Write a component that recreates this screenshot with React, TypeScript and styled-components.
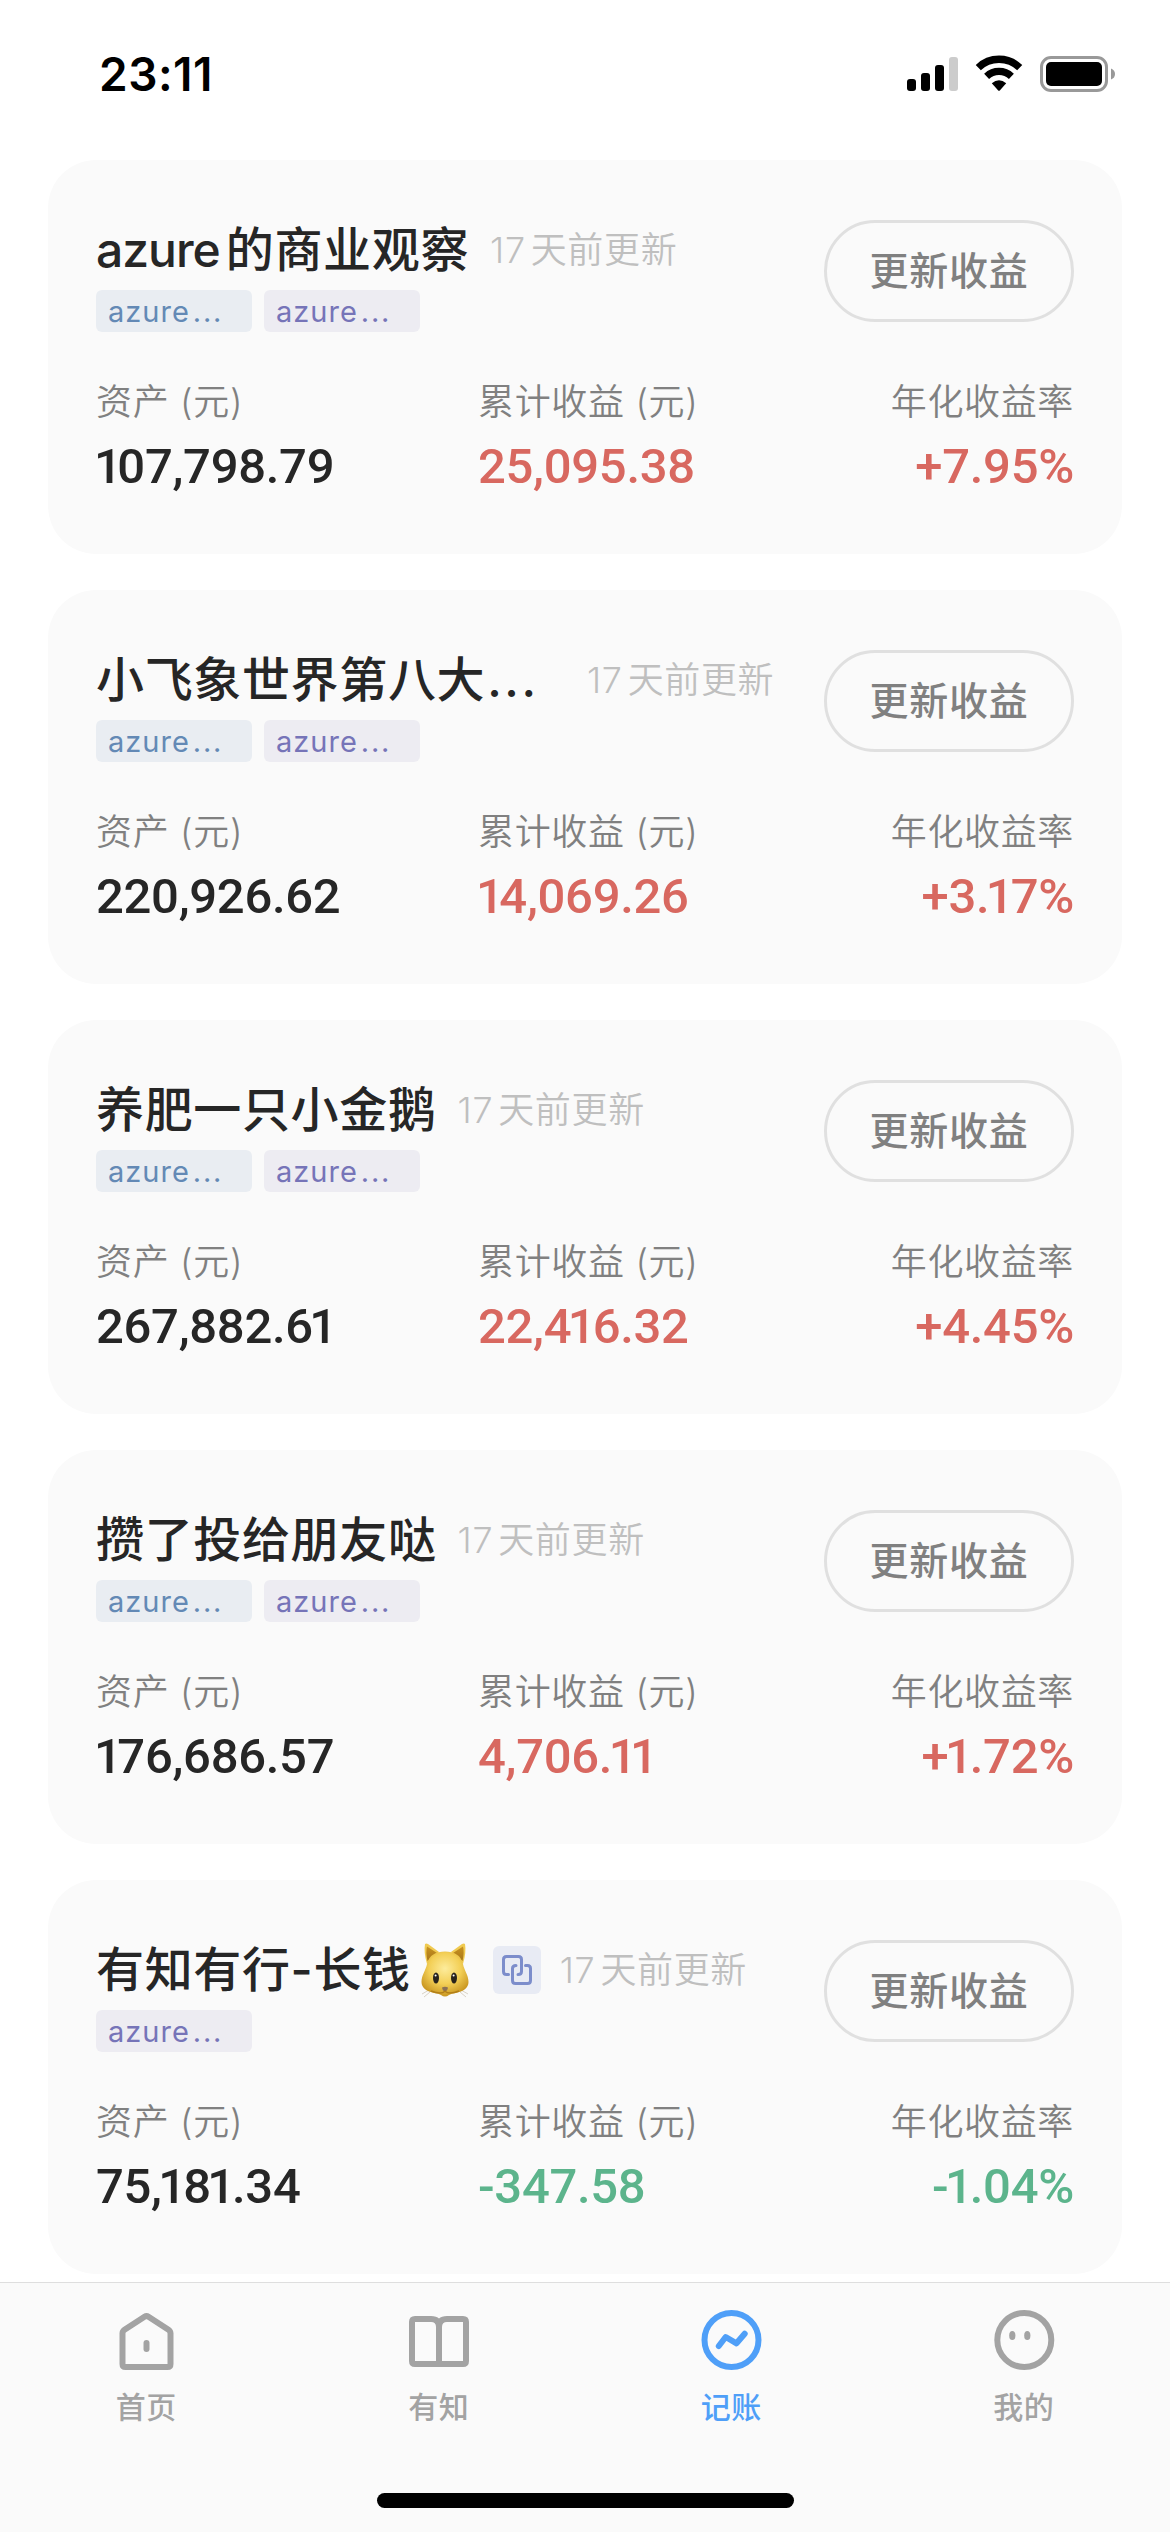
import React from "react";
import styled, { createGlobalStyle } from "styled-components";

const GlobalStyle = createGlobalStyle`
  * { box-sizing: border-box; }
  html, body { margin: 0; padding: 0; background: #fff; }
  body { overflow: hidden; -webkit-font-smoothing: antialiased; }
`;

const GREY = "#a3a3a3";
const BLUE = "#4f9ff8";

const Screen = styled.div`
  display: flex;
  flex-direction: column;
  width: 1170px;
  height: 2532px;
  background: #fff;
  font-family: Inter, "Noto Sans CJK SC", sans-serif;
  white-space: nowrap;
  overflow: hidden;
`;

const StatusBar = styled.header`
  flex: none;
  display: flex;
  justify-content: space-between;
  align-items: center;
  height: 148px;
  padding: 0 54px 0 99px;
`;

const Clock = styled.div`
  font-size: 46px;
  line-height: 60px;
  font-weight: 600;
  letter-spacing: 0.5px;
  color: #000;
`;

const CardList = styled.main`
  flex: 1;
  min-height: 0;
  display: flex;
  flex-direction: column;
  gap: 36px;
  padding: 12px 48px 0;
`;

const Card = styled.section`
  flex: none;
  height: 394px;
  padding: 60px 48px 0;
  border-radius: 48px;
  background: #fafafa;
`;

const CardHeader = styled.div`
  display: flex;
  justify-content: space-between;
  align-items: flex-start;
  height: 112px;
`;

const TitleRow = styled.div`
  display: flex;
  align-items: center;
  height: 60px;
`;

const Title = styled.h2<{ $clipped?: boolean }>`
  display: flex;
  align-items: center;
  margin: 0;
  min-width: ${(p) => (p.$clipped ? "470px" : "0")};
  font-size: 48px;
  line-height: 60px;
  font-weight: 500;
  letter-spacing: 0.65px;
  color: #262626;
`;

const Latin = styled.span`
  margin-right: 6px;
  letter-spacing: -1px;
`;

const Dots = styled.span`
  margin-left: 2px;
  letter-spacing: 2.6px;
`;

const LinkBadge = styled.span`
  display: flex;
  width: 48px;
  height: 48px;
  margin-left: 23px;
  border-radius: 6px;
  background: #e8ebf4;
`;

const Updated = styled.span<{ $tight?: boolean }>`
  display: flex;
  margin-left: ${(p) => (p.$tight ? "19px" : "21px")};
  font-size: 36px;
  line-height: 48px;
  font-weight: 350;
  letter-spacing: 0.65px;
  color: #bfbfbf;
`;

const Days = styled.span`
  margin-right: 5px;
`;

const Tags = styled.div`
  display: flex;
  gap: 12px;
  margin-top: 10px;
`;

const Tag = styled.span<{ $tone: "blue" | "purple" }>`
  width: 156px;
  height: 42px;
  padding-left: 12px;
  border-radius: 6px;
  font-size: 29px;
  line-height: 43px;
  letter-spacing: 1px;
  color: ${(p) => (p.$tone === "blue" ? "#6389b5" : "#7674b8")};
  background: ${(p) => (p.$tone === "blue" ? "#e9edf2" : "#edecf2")};
`;

const TagDots = styled.span`
  margin-left: 3px;
  letter-spacing: 1.8px;
`;

const UpdateButton = styled.button`
  width: 250px;
  height: 102px;
  padding: 0;
  border: 3px solid #e0e0e0;
  border-radius: 51px;
  background: transparent;
  font-family: inherit;
  font-size: 39px;
  line-height: 48px;
  font-weight: 500;
  letter-spacing: 0.7px;
  color: #808080;
`;

const Stats = styled.div`
  display: grid;
  grid-template-columns: 382px 1fr auto;
  margin-top: 46px;
`;

const Stat = styled.div<{ $end?: boolean }>`
  display: flex;
  flex-direction: column;
  gap: 11px;
  align-items: ${(p) => (p.$end ? "flex-end" : "flex-start")};
`;

const StatLabel = styled.span`
  font-size: 36px;
  line-height: 48px;
  font-weight: 350;
  letter-spacing: 0.65px;
  color: #808080;
`;

type Tone = "ink" | "gain" | "loss";
const toneColor: Record<Tone, string> = { ink: "#262626", gain: "#d86860", loss: "#5cb48c" };

const StatValue = styled.span<{ $tone: Tone }>`
  font-family: Roboto, Inter, sans-serif;
  font-size: 49px;
  line-height: 60px;
  font-weight: 500;
  letter-spacing: -0.3px;
  color: ${(p) => toneColor[p.$tone]};
`;

// A run of ones is set tighter than the other figures.
const Ones = styled.span<{ $leading: boolean }>`
  margin-left: ${(p) => (p.$leading ? "-2px" : "-3.5px")};
  margin-right: ${(p) => (p.$leading ? "2px" : "3.5px")};
  letter-spacing: -6.5px;
`;

const TabBar = styled.nav`
  flex: none;
  display: flex;
  flex-direction: column;
  align-items: center;
  height: 250px;
  border-top: 1px solid #dedede;
  background: #fafafa;
`;

const TabItems = styled.div`
  display: flex;
  width: 100%;
  height: 210px;
  padding-top: 21px;
`;

const TabItem = styled.div<{ $active?: boolean }>`
  flex: 1;
  display: flex;
  flex-direction: column;
  align-items: center;
  gap: 11px;
  font-size: 30px;
  line-height: 40px;
  font-weight: 500;
  letter-spacing: 0.4px;
  color: ${(p) => (p.$active ? BLUE : GREY)};
`;

const HomeIndicator = styled.div`
  width: 417px;
  height: 15px;
  border-radius: 8px;
  background: #000;
`;

const StatusIcons = () => (
  <svg width="209" height="40" viewBox="907 54 209 40" fill="none">
    <rect x="907" y="79" width="9" height="12" rx="3" fill="#000" />
    <rect x="921" y="73" width="9" height="18" rx="3" fill="#000" />
    <rect x="935" y="65" width="9" height="26" rx="3" fill="#000" />
    <rect x="949" y="57" width="9" height="34" rx="3" fill="#ccc" />
    <path d="M978.3 67.6A30 30 0 0 1 1019.7 67.6" stroke="#000" strokeWidth="7.4" />
    <path d="M986.6 76.3A18 18 0 0 1 1011.4 76.3" stroke="#000" strokeWidth="7.2" />
    <path d="M991.8 83.2Q999 77.5 1006.2 83.2L999.8 90.4Q999 91.2 998.2 90.4Z" fill="#000" />
    <rect x="1041.5" y="57.5" width="65" height="33" rx="9.5" stroke="#999" strokeWidth="3" />
    <rect x="1046" y="62" width="56" height="24" rx="5" fill="#000" />
    <path d="M1111 68.5Q1115 70 1115 74T1111 79.5Z" fill="#999" />
  </svg>
);

const LinkIcon = () => (
  <svg width="48" height="48" viewBox="0 0 48 48" fill="none" stroke="#7c8dcb" strokeWidth="3" strokeLinecap="round">
    <path d="M15.5 28.5H13.5Q10.5 28.5 10.5 25.5V13.5Q10.5 10.5 13.5 10.5H25.5Q28.5 10.5 28.5 13.5V25.5Q28.5 28.5 25 28.5" />
    <path d="M23 19.5Q19.5 19.5 19.5 22.5V34.5Q19.5 37.5 22.5 37.5H34.5Q37.5 37.5 37.5 34.5V22.5Q37.5 19.5 34.5 19.5H32.5" />
  </svg>
);

const CatArt = styled.svg`
  display: block;
  margin-left: 9px;
`;

const Cat = () => (
  <CatArt width="50" height="56" viewBox="0 0 50 56" fill="none">
    <defs>
      <radialGradient id="fur" cx="0.5" cy="0.38" r="0.62">
        <stop offset="0" stopColor="#fdec9c" />
        <stop offset="0.55" stopColor="#f3cf56" />
        <stop offset="1" stopColor="#c99620" />
      </radialGradient>
      <linearGradient id="ear" x1="0" y1="0" x2="0" y2="1">
        <stop offset="0" stopColor="#c8921f" />
        <stop offset="1" stopColor="#a8771a" />
      </linearGradient>
    </defs>
    <path d="M9 48L2 52M10 50L4 55M41 48L48 52M40 50L46 55" stroke="#d9d2c6" strokeWidth="1" />
    <path d="M5 2Q6 1 8 2L19 10L7 22Q3.5 10 5 2ZM45 2Q44 1 42 2L31 10L43 22Q46.5 10 45 2Z" fill="#f0ca50" />
    <path d="M7 4.5L17 11L7.5 19Q5.5 10 7 4.5ZM43 4.5L33 11L42.5 19Q44.5 10 43 4.5Z" fill="url(#ear)" />
    <path d="M25 9.5C34 9.5 41 13 43 22C44 28 48.5 33 48.5 40C48.5 46 43 49.5 36 51Q31 51.5 29 53Q25 56 21 53Q19 51.5 14 51C7 49.5 1.5 46 1.5 40C1.5 33 6 28 7 22C9 13 16 9.5 25 9.5Z" fill="url(#fur)" />
    <ellipse cx="16" cy="36" rx="3" ry="5.5" fill="#29231c" />
    <ellipse cx="34" cy="36" rx="3" ry="5.5" fill="#29231c" />
    <circle cx="15.6" cy="33.5" r="1" fill="#fff" />
    <circle cx="33.6" cy="33.5" r="1" fill="#fff" />
    <path d="M22 45.5Q25 44 28 45.5Q27.5 49 25 49.3Q22.5 49 22 45.5Z" fill="#8c7154" />
    <path d="M11 49Q21 53 25 49.3Q29 53 39 49" stroke="#b27f18" strokeWidth="1.5" />
  </CatArt>
);

const TabIcon = ({ children }: { children: React.ReactNode }) => (
  <svg width="72" height="72" viewBox="0 0 72 72" fill="none" stroke="currentColor" strokeWidth="6" strokeLinecap="round" strokeLinejoin="round">
    {children}
  </svg>
);

const tabs = [
  {
    label: "首页",
    icon: (
      <>
        <path d="M12.5 60V29.5Q12.5 27 14.5 25.7L34.5 12.8Q36.5 11.5 38.5 12.8L58.5 25.7Q60.5 27 60.5 29.5V60Q60.5 63 57.5 63H15.5Q12.5 63 12.5 60Z" />
        <path d="M36.5 39V45" />
      </>
    ),
  },
  {
    label: "有知",
    icon: <path d="M36 60V23Q36 15 28 15H12Q9 15 9 18V57Q9 60 12 60H60Q63 60 63 57V18Q63 15 60 15H44Q36 15 36 23" />,
  },
  {
    label: "记账",
    active: true,
    icon: (
      <>
        <circle cx="36.5" cy="36" r="27" />
        <path d="M23.8 42L30.7 33L41.5 39.3L49.7 29.7" />
      </>
    ),
  },
  {
    label: "我的",
    icon: (
      <>
        <circle cx="36.3" cy="36" r="27" />
        <g fill="currentColor" stroke="none">
          <ellipse cx="24.3" cy="31.5" rx="3.1" ry="4.6" />
          <ellipse cx="39.3" cy="31.5" rx="3.1" ry="4.6" />
        </g>
      </>
    ),
  },
];

interface Account {
  latin?: string;
  name: string;
  clipped?: boolean;
  cat?: boolean;
  linked?: boolean;
  tags: ("blue" | "purple")[];
  asset: string;
  profit: string;
  rate: string;
  tone: Tone;
}

const accounts: Account[] = [
  { latin: "azure", name: "的商业观察", tags: ["blue", "purple"], asset: "107,798.79", profit: "25,095.38", rate: "+7.95%", tone: "gain" },
  { name: "小飞象世界第八大", clipped: true, tags: ["blue", "purple"], asset: "220,926.62", profit: "14,069.26", rate: "+3.17%", tone: "gain" },
  { name: "养肥一只小金鹅", tags: ["blue", "purple"], asset: "267,882.61", profit: "22,416.32", rate: "+4.45%", tone: "gain" },
  { name: "攒了投给朋友哒", tags: ["blue", "purple"], asset: "176,686.57", profit: "4,706.11", rate: "+1.72%", tone: "gain" },
  { name: "有知有行-长钱", cat: true, linked: true, tags: ["purple"], asset: "75,181.34", profit: "-347.58", rate: "-1.04%", tone: "loss" },
];

const Figure = ({ value, tone }: { value: string; tone: Tone }) => (
  <StatValue $tone={tone}>
    {value
      .split(/(1+)/)
      .map((part, i) => (i % 2 ? <Ones key={i} $leading={value.startsWith("1") && i === 1}>{part}</Ones> : part))}
  </StatValue>
);

const AccountCard = ({ account }: { account: Account }) => (
  <Card>
    <CardHeader>
      <div>
        <TitleRow>
          <Title $clipped={account.clipped}>
            {account.latin && <Latin>{account.latin}</Latin>}
            {account.name}
            {account.clipped && <Dots>...</Dots>}
            {account.cat && <Cat />}
          </Title>
          {account.linked && (
            <LinkBadge>
              <LinkIcon />
            </LinkBadge>
          )}
          <Updated $tight={account.linked}>
            <Days>17</Days>天前更新
          </Updated>
        </TitleRow>
        <Tags>
          {account.tags.map((tone) => (
            <Tag key={tone} $tone={tone}>
              azure<TagDots>...</TagDots>
            </Tag>
          ))}
        </Tags>
      </div>
      <UpdateButton>更新收益</UpdateButton>
    </CardHeader>
    <Stats>
      <Stat>
        <StatLabel>资产 (元)</StatLabel>
        <Figure tone="ink" value={account.asset} />
      </Stat>
      <Stat>
        <StatLabel>累计收益 (元)</StatLabel>
        <Figure tone={account.tone} value={account.profit} />
      </Stat>
      <Stat $end>
        <StatLabel>年化收益率</StatLabel>
        <Figure tone={account.tone} value={account.rate} />
      </Stat>
    </Stats>
  </Card>
);

export default function App() {
  return (
    <Screen>
      <GlobalStyle />
      <StatusBar>
        <Clock>23:11</Clock>
        <StatusIcons />
      </StatusBar>
      <CardList>
        {accounts.map((account) => (
          <AccountCard key={account.name} account={account} />
        ))}
      </CardList>
      <TabBar>
        <TabItems>
          {tabs.map((tab) => (
            <TabItem key={tab.label} $active={tab.active}>
              <TabIcon>{tab.icon}</TabIcon>
              {tab.label}
            </TabItem>
          ))}
        </TabItems>
        <HomeIndicator />
      </TabBar>
    </Screen>
  );
}
